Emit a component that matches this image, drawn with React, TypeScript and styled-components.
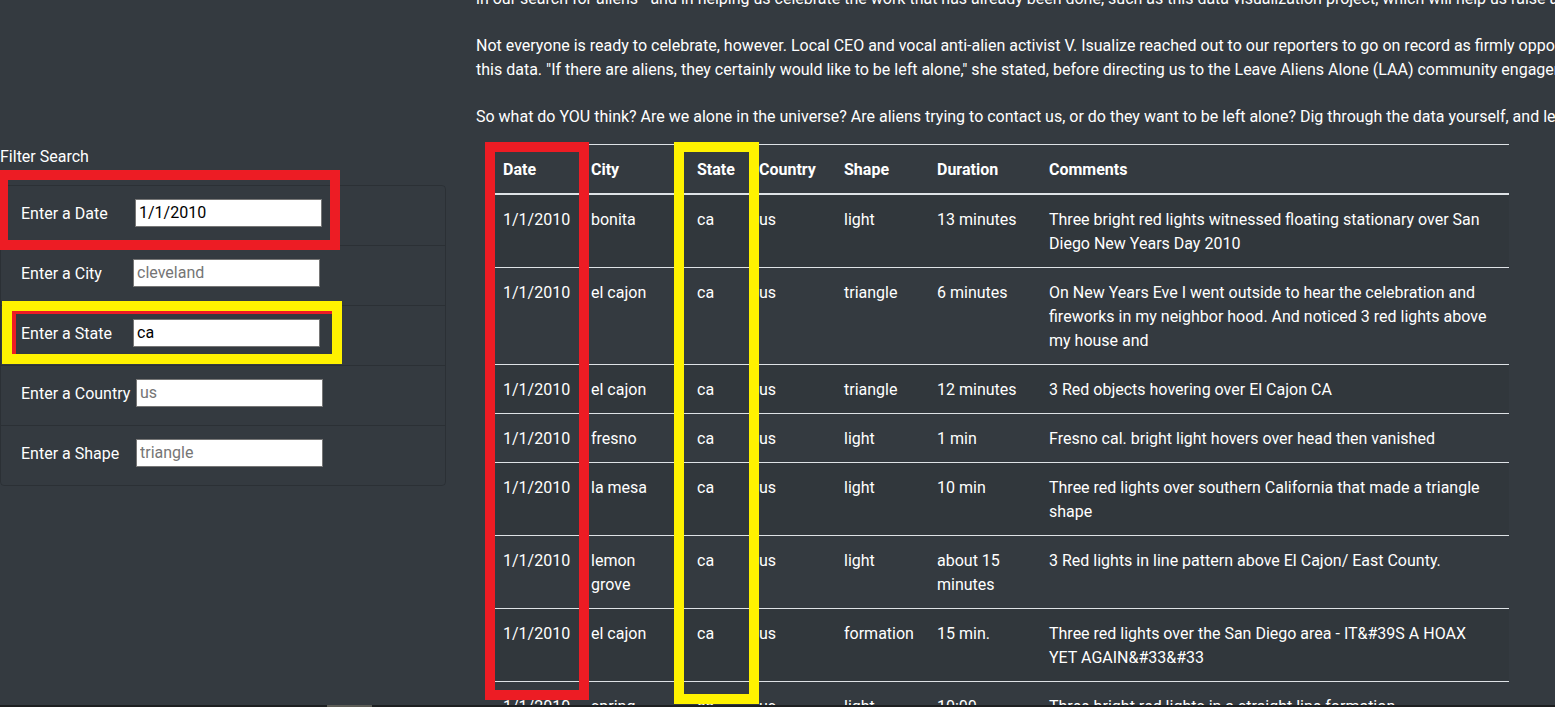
import React from "react";
import styled, { createGlobalStyle } from "styled-components";

const FONT = `Roboto, "Liberation Sans", sans-serif`;

const GlobalStyle = createGlobalStyle`
  html, body {
    margin: 0;
    padding: 0;
    background: #343a40;
    color: #ffffff;
    font-family: ${FONT};
    font-size: 16px;
    line-height: 24px;
    overflow: hidden;
  }
  * { box-sizing: border-box; }
`;

const Screen = styled.div`
  width: 1555px;
  height: 707px;
  display: flex;
  flex-direction: column;
  overflow: hidden;
`;

const Page = styled.div`
  flex: 0 0 705px;
  display: flex;
  overflow: hidden;
`;

const ScrollTrack = styled.div`
  flex: 0 0 2px;
  background: #1d1f21;
  display: flex;
`;

const ScrollThumb = styled.div`
  margin-left: 327px;
  width: 45px;
  background: #5b5b55;
`;

/* ---------- Sidebar ---------- */

const Sidebar = styled.aside`
  position: relative;
  flex: 0 0 446px;
  padding-top: 145px;
`;

const FilterTitle = styled.div`
  line-height: 24px;
  margin-bottom: 16px;
`;

const FilterList = styled.ul`
  list-style: none;
  margin: 0;
  padding: 0;
  border: 1px solid rgba(0, 0, 0, 0.16);
  border-radius: 4px;
`;

const FilterRow = styled.li`
  height: 60px;
  display: flex;
  align-items: center;
  padding: 0 20px;
  border-top: 1px solid rgba(0, 0, 0, 0.16);
  &:first-child {
    border-top: none;
    height: 59px;
  }
`;

const FilterLabel = styled.label<{ $w: number }>`
  flex: 0 0 auto;
  min-width: ${(p) => p.$w}px;
  white-space: nowrap;
  margin-top: -4px;
`;

const FilterInput = styled.input`
  width: 187px;
  height: 28px;
  border: 1px solid #767676;
  border-radius: 0;
  padding: 0 3px;
  margin: -6px 0 0 0;
  background: #fff;
  color: #000;
  font-family: ${FONT};
  font-size: 16px;
  &::placeholder {
    color: #757575;
  }
`;

const Mark = styled.div<{
  $color: string;
  $top: number;
  $left: number;
  $w: number;
  $h: number;
  $bw: string;
}>`
  position: absolute;
  top: ${(p) => p.$top}px;
  left: ${(p) => p.$left}px;
  width: ${(p) => p.$w}px;
  height: ${(p) => p.$h}px;
  border-style: solid;
  border-color: ${(p) => p.$color};
  border-width: ${(p) => p.$bw};
  pointer-events: none;
`;

/* ---------- Main ---------- */

const Main = styled.main`
  flex: 0 0 auto;
  margin-left: 30px;
  margin-top: -13px;
`;

const Para = styled.p`
  margin: 0 0 23px 0;
  white-space: nowrap;
  line-height: 24px;
  &:last-of-type {
    margin-bottom: 15px;
  }
`;

const TableWrap = styled.div`
  position: relative;
  margin-left: 15px;
  width: 1018px;
`;

const Table = styled.table`
  width: 1018px;
  table-layout: fixed;
  border-collapse: collapse;
  color: #fff;
`;

const Th = styled.th<{ $w: number }>`
  width: ${(p) => p.$w}px;
  text-align: left;
  vertical-align: bottom;
  font-weight: 700;
  padding: 13px 12px 11px;
  border-top: 1px solid #dee2e6;
  border-bottom: 2px solid #dee2e6;
  line-height: 24px;
`;

const Tr = styled.tr`
  &:nth-child(odd) {
    background: rgba(0, 0, 0, 0.05);
  }
`;

const Td = styled.td`
  padding: 13px 12px 11px;
  vertical-align: top;
  border-top: 1px solid #dee2e6;
  line-height: 24px;
`;

const columns: [string, number][] = [
  ["Date", 88],
  ["City", 106],
  ["State", 62],
  ["Country", 85],
  ["Shape", 93],
  ["Duration", 112],
  ["Comments", 472],
];

const rows: string[][] = [
  ["1/1/2010", "bonita", "ca", "us", "light", "13 minutes", "Three bright red lights witnessed floating stationary over San Diego New Years Day 2010"],
  ["1/1/2010", "el cajon", "ca", "us", "triangle", "6 minutes", "On New Years Eve I went outside to hear the celebration and fireworks in my neighbor hood. And noticed 3 red lights above my house and"],
  ["1/1/2010", "el cajon", "ca", "us", "triangle", "12 minutes", "3 Red objects hovering over El Cajon CA"],
  ["1/1/2010", "fresno", "ca", "us", "light", "1 min", "Fresno cal. bright light hovers over head then vanished"],
  ["1/1/2010", "la mesa", "ca", "us", "light", "10 min", "Three red lights over southern California that made a triangle shape"],
  ["1/1/2010", "lemon grove", "ca", "us", "light", "about 15 minutes", "3 Red lights in line pattern above El Cajon/ East County."],
  ["1/1/2010", "el cajon", "ca", "us", "formation", "15 min.", "Three red lights over the San Diego area - IT&#39S A HOAX YET AGAIN&#33&#33"],
  ["1/1/2010", "spring valley", "ca", "us", "light", "10:00", "Three bright red lights in a straight line formation"],
];

const filters = [
  { label: "Enter a Date", w: 114, value: "1/1/2010", placeholder: "" },
  { label: "Enter a City", w: 112, value: "", placeholder: "cleveland" },
  { label: "Enter a State", w: 112, value: "ca", placeholder: "" },
  { label: "Enter a Country", w: 115, value: "", placeholder: "us" },
  { label: "Enter a Shape", w: 115, value: "", placeholder: "triangle" },
];

export default function App() {
  return (
    <>
      <GlobalStyle />
      <Screen>
        <Page>
          <Sidebar>
            <FilterTitle>Filter Search</FilterTitle>
            <FilterList>
              {filters.map((f) => (
                <FilterRow key={f.label}>
                  <FilterLabel $w={f.w}>{f.label}</FilterLabel>
                  <FilterInput
                    type="text"
                    defaultValue={f.value}
                    placeholder={f.placeholder}
                  />
                </FilterRow>
              ))}
            </FilterList>
            <Mark $color="#ed1c24" $top={170} $left={0} $w={340} $h={80} $bw="10px 10px 10px 8px" />
            <Mark $color="#ed1c24" $top={311} $left={12} $w={320} $h={43} $bw="3px 0 0 4px" />
            <Mark $color="#fff200" $top={301} $left={2} $w={340} $h={63} $bw="10px" />
          </Sidebar>
          <Main>
            <Para>
              in our search for aliens - and in helping us celebrate the work that has already been done, such as this data visualization project, which will help us raise awareness
            </Para>
            <Para>
              Not everyone is ready to celebrate, however. Local CEO and vocal anti-alien activist V. Isualize reached out to our reporters to go on record as firmly opposed to the release of
              <br />
              this data. "If there are aliens, they certainly would like to be left alone," she stated, before directing us to the Leave Aliens Alone (LAA) community engagement page.
            </Para>
            <Para>
              So what do YOU think? Are we alone in the universe? Are aliens trying to contact us, or do they want to be left alone? Dig through the data yourself, and let us know.
            </Para>
            <TableWrap>
              <Table>
                <thead>
                  <tr>
                    {columns.map(([name, w]) => (
                      <Th key={name} $w={w}>
                        {name}
                      </Th>
                    ))}
                  </tr>
                </thead>
                <tbody>
                  {rows.map((r, i) => (
                    <Tr key={i}>
                      {r.map((c, j) => (
                        <Td key={j}>{c}</Td>
                      ))}
                    </Tr>
                  ))}
                </tbody>
              </Table>
              <Mark $color="#ed1c24" $top={-2} $left={-6} $w={104} $h={558} $bw="10px" />
              <Mark $color="#fff200" $top={-2} $left={183} $w={85} $h={562} $bw="10px" />
            </TableWrap>
          </Main>
        </Page>
        <ScrollTrack>
          <ScrollThumb />
        </ScrollTrack>
      </Screen>
    </>
  );
}
